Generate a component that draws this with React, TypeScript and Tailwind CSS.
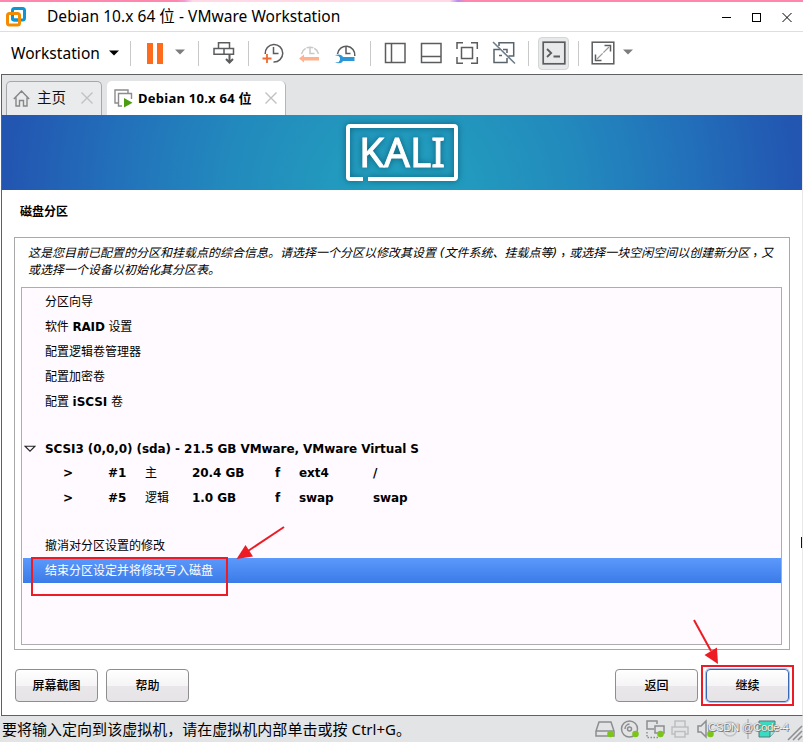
import type { ReactNode } from "react";

const ui = "font-['Noto_Sans','Noto_Sans_CJK_SC',sans-serif]";
const vm = "font-['DejaVu_Sans','Noto_Sans_CJK_SC',sans-serif]";

function Sep({ className = "" }: { className?: string }) {
  return <div className={`h-[25px] w-px shrink-0 bg-[#c8c8c8] ${className}`} />;
}

function Caret({ className = "" }: { className?: string }) {
  return (
    <svg className={`shrink-0 ${className}`} width="10" height="6" viewBox="0 0 10 6">
      <path d="M0 0.5H10L5 5.5Z" fill="currentColor" />
    </svg>
  );
}

function Icon({ className = "", children }: { className?: string; children: ReactNode }) {
  return (
    <svg
      className={`shrink-0 ${className}`}
      width="24"
      height="24"
      viewBox="0 0 24 24"
      fill="none"
      stroke="#5b5c5e"
      strokeWidth="1.5"
    >
      {children}
    </svg>
  );
}

function TitleBar() {
  return (
    <header className="flex h-[30px] shrink-0 items-center border-b border-[#dedede] bg-white pl-[5px]">
      <svg width="22" height="22" viewBox="0 0 22 22" fill="none" strokeWidth="3" className="mt-[1px] shrink-0">
        <rect x="7.5" y="2.5" width="12" height="11.5" rx="2" stroke="#0f95d3" />
        <rect x="2.5" y="7.5" width="12" height="11.5" rx="2" stroke="#f38b00" />
        <path d="M7.5 9V12a2 2 0 0 0 2 2H13" stroke="#0f95d3" />
      </svg>
      <h1 className="ml-5 whitespace-pre text-[15.5px] leading-[29px] tracking-[0.04px] text-black">
        Debian 10.x 64 位 - VMware Workstation
      </h1>
      <svg className="ml-auto mr-[10px] shrink-0" width="72" height="12" viewBox="0 0 72 12" fill="none" stroke="#000">
        <path d="M1 6.5H10" />
        <rect x="31.5" y="2.5" width="8" height="8" />
        <path d="M61.5 2L70.5 11M70.5 2L61.5 11" />
      </svg>
    </header>
  );
}

function Toolbar() {
  return (
    <nav className="flex h-[42px] shrink-0 items-center bg-white pl-[11px]">
      <span className="-mt-px w-[98px] text-[15.5px] leading-5 tracking-[0.05px] text-black">Workstation</span>
      <Caret className="text-black" />
      <Sep className="ml-[11px]" />
      <div className="ml-4 flex gap-1">
        <span className="h-[21px] w-[6px] bg-[#ff6b1c]" />
        <span className="h-[21px] w-[6px] bg-[#ff6b1c]" />
      </div>
      <Caret className="ml-3 -mt-[3px] text-[#7d7d7d]" />
      <Sep className="ml-[13px]" />
      <Icon className="ml-[13px]">
        <path d="M6.5 1.8H17.5V7.5H6.5ZM2 7.5H21.5V13.2H2ZM12 7.5V13.2" />
        <path d="M17.5 13V21M14 18L17.5 21.5L21 18" strokeWidth="2" />
      </Icon>
      <Sep className="ml-[12px]" />
      <Icon className="ml-[12px]">
        <path d="M4.2 13A8.8 8.8 0 1 1 12.5 21" />
        <path d="M12.5 6V12.5H17.5" />
        <path d="M1.5 17.5H10.5M6 13V22" stroke="#ef6b32" strokeWidth="1.8" />
      </Icon>
      <Icon className="ml-[13px]">
        <path d="M3.5 13A8.7 8.7 0 0 1 20.5 13" stroke="#c9c9c9" strokeDasharray="7 1" />
        <path d="M12 6V12.5H16.5" stroke="#c9c9c9" />
        <path d="M1 17.5L6 13.5V16H21V19.5H6V21.5Z" fill="#ffb28d" stroke="none" />
      </Icon>
      <Icon className="ml-[12px]">
        <path d="M3.5 13A8.7 8.7 0 0 1 20.8 15" />
        <path d="M12 6V12.5H16.5" />
        <path
          d="M1 14.3C4.5 12.5 8 13.5 9 16H20.5V20H9C8 22.4 4 23 1 21.3H4.5L6 19V16.8L4.5 15Z"
          fill="#2d96d4"
          stroke="none"
        />
      </Icon>
      <Sep className="ml-[12px]" />
      <Icon className="ml-[12px]">
        <path d="M2.5 2.5H22V21.5H2.5ZM8.5 2.5V21.5" />
      </Icon>
      <Icon className="ml-[12px]">
        <path d="M2.5 2.5H22V21.5H2.5ZM2.5 15.5H22" />
      </Icon>
      <Icon className="ml-[12px]">
        <path d="M2 8V1.7H8M16 1.7H22.3V8M22.3 16V22.3H16M8 22.3H2V16" />
        <rect x="6.5" y="6.5" width="11" height="11" />
      </Icon>
      <Icon className="ml-[13px]">
        <path d="M7 5V1.7H21.7V15H16.5M8 8.5H2V21.5H15V17M11 8.5H15V12M7 14.5H10" stroke="#58636c" />
        <path d="M1 1L23 22.5" stroke="#6c7c8a" />
      </Icon>
      <Sep className="ml-[12px]" />
      <div className="ml-[9px] flex h-[33px] w-[31px] shrink-0 items-center justify-center rounded-[4px] border border-[#d4d5d5] bg-[#e8e9ea]">
        <Icon className="-mt-px">
          <rect x="1.2" y="1.2" width="21.6" height="21.6" strokeWidth="1.7" />
          <path d="M5 8L9.2 12L5 16M11.5 15.5H18" strokeWidth="1.8" />
        </Icon>
      </div>
      <Sep className="ml-[9px]" />
      <Icon className="ml-[12px]">
        <rect x="1.2" y="1.2" width="21.6" height="21.6" />
        <path d="M13.5 4.5H19.5V10.5M4.5 13.5V19.5H10.5" />
        <path d="M6 18L18 6" stroke="#999" strokeWidth="1.2" strokeDasharray="8 1" />
      </Icon>
      <Caret className="ml-[8px] -mt-[3px] text-[#7d7d7d]" />
    </nav>
  );
}

function Close({ className = "" }: { className?: string }) {
  return (
    <svg className={`shrink-0 ${className}`} width="12" height="12" viewBox="0 0 12 12" stroke="#c1c1c1" strokeWidth="1.4">
      <path d="M0.5 0.5L11.5 11.5M11.5 0.5L0.5 11.5" />
    </svg>
  );
}

function Tabs() {
  return (
    <div className="flex h-10 shrink-0 items-end gap-[5px] bg-[#e3e4e6] pl-1">
      <div className="flex h-[34px] w-[96px] items-center rounded-t-[5px] border border-b-0 border-[#a5a7aa] bg-[#eaebec] pl-[6px]">
        <svg width="17" height="17" viewBox="0 0 17 17" fill="none" stroke="#868686" strokeWidth="1.4" className="shrink-0">
          <path d="M0.8 9L8.5 1L16.2 9M3 7.5V16H6.5V10.5H10.5V16H14V7.5" />
        </svg>
        <span className="-mt-[3px] ml-[7px] text-[14.5px] leading-5 text-[#111]">主页</span>
        <Close className="-mt-px ml-[15px]" />
      </div>
      <div className="flex h-[34px] w-[179px] items-center rounded-t-[5px] border-r border-[#b4b5b7] bg-white pl-[7px]">
        <svg width="19" height="19" viewBox="0 0 19 19" fill="none" stroke="#8c8c8c" strokeWidth="1.4" className="shrink-0">
          <path d="M4 14H1V1H14V4M8 17H4.5V4.5H17.5V10" />
          <path d="M10 9L18.5 13.8L10 18.5Z" fill="#4c9c13" stroke="none" />
        </svg>
        <span className="ml-[5px] w-[127px] whitespace-pre text-[13px] font-bold leading-5 tracking-[0.26px] text-black">
          Debian 10.x 64 位
        </span>
        <Close className="-mt-px" />
      </div>
    </div>
  );
}

function Banner() {
  return (
    <div className="flex h-[75px] shrink-0 justify-center bg-[radial-gradient(circle_at_50%_110%,#209fbd_0%,#2299be_18%,#228abd_43%,#226fba_72%,#2256b1_97%)]">
      <svg width="120" height="75" viewBox="342 115 120 75" className="drop-shadow-[0_0_3px_rgba(0,60,80,0.65)]">
        <path d="M363 179H350a2 2 0 0 1-2-2V128a2 2 0 0 1 2-2H454a2 2 0 0 1 2 2V177a2 2 0 0 1-2 2H368" fill="none" stroke="#fff" strokeWidth="4" />
        <text
          x="359"
          y="167"
          fill="#fff"
          stroke="#fff"
          strokeWidth="0.9"
          fontSize="39.5"
          textLength="86"
          lengthAdjust="spacingAndGlyphs"
          className={ui}
        >
          KALI
        </text>
      </svg>
    </div>
  );
}

function Row({ children, className = "h-[25px]" }: { children?: ReactNode; className?: string }) {
  return <div className={`flex shrink-0 items-center whitespace-pre pl-[22px] ${className}`}>{children}</div>;
}

function Partition({ cells, className }: { cells: string[]; className: string }) {
  return (
    <div className={`grid grid-cols-[45px_37px_47px_83px_24px_74px_1fr] items-center whitespace-pre pl-10 font-bold tracking-[-0.07px] ${className}`}>
      {cells.map((cell, i) => (
        <span key={i} className={i === 2 ? "font-normal" : ""}>
          {cell}
        </span>
      ))}
    </div>
  );
}

function PartitionList() {
  return (
    <div className="ml-[6px] mr-[7px] flex h-[358px] flex-col border border-[#adadad] bg-[#fefaff] pl-px pt-px text-[12px] leading-[18px] text-black">
      <Row>分区向导</Row>
      <Row className="h-[25px] tracking-[-0.15px]">
        软件 <b>RAID</b> 设置
      </Row>
      <Row>配置逻辑卷管理器</Row>
      <Row>配置加密卷</Row>
      <Row className="h-[25px] tracking-[-0.07px]">
        配置 <b>iSCSI</b> 卷
      </Row>
      <Row className="h-[22px]" />
      <div className="flex h-[25px] items-center pl-[1px]">
        <svg width="12" height="8" viewBox="0 0 12 8" fill="none" stroke="#222" strokeWidth="1.1">
          <path d="M1 1.2H11L6 6.2Z" />
        </svg>
        <b className="ml-[9px] whitespace-pre tracking-[-0.075px]">SCSI3 (0,0,0) (sda) - 21.5 GB VMware, VMware Virtual S</b>
      </div>
      <Partition className="h-[24px]" cells={[">", "#1", "主", "20.4 GB", "f", "ext4", "/"]} />
      <Partition className="h-[25px]" cells={[">", "#5", "逻辑", "1.0 GB", "f", "swap", "swap"]} />
      <Row className="h-[23px]" />
      <Row className="h-[25px] pt-px">撤消对分区设置的修改</Row>
      <Row className="h-[25px] bg-linear-to-b from-[#5c99fc] to-[#3b7be8] pt-px text-white">结束分区设定并将修改写入磁盘</Row>
    </div>
  );
}

function Button({ children, focused = false }: { children: ReactNode; focused?: boolean }) {
  return (
    <button
      className={`h-[33px] w-[83px] rounded-[4px] border bg-[linear-gradient(#ffffff,#f6f4f6_50%,#e9e7e9_52%,#e6e4e6)] pt-px text-[12px] font-medium leading-[18px] text-black ${
        focused ? "border-[#3867b4] shadow-[0_0_0_1px_#a9c3f0]" : "border-[#8e8e8e]"
      }`}
    >
      {children}
    </button>
  );
}

function Comma() {
  return <span className="relative top-[3px] font-['Noto_Sans_CJK_TC',sans-serif] not-italic">，</span>;
}

function Installer() {
  return (
    <main className={`flex h-[525px] shrink-0 flex-col bg-white ${vm}`}>
      <h2 className="ml-[18px] mt-[13px] text-[12px] font-bold leading-[18px] text-black">磁盘分区</h2>
      <section className="ml-3 mt-[16px] h-[413px] w-[776px] border border-[#a8a8a8]">
        <div className="ml-[13px] h-[49px] whitespace-pre pt-[5px] text-[12px] italic leading-[17px] text-black">
          <p>
            这是您目前已配置的分区和挂载点的综合信息。请选择一个分区以修改其设置 (文件系统、挂载点等)
            <Comma />
            或选择一块空闲空间以创建新分区
            <Comma />又
          </p>
          <p>或选择一个设备以初始化其分区表。</p>
        </div>
        <PartitionList />
      </section>
      <div className="ml-[13px] mr-[13px] mt-[19px] flex">
        <Button>屏幕截图</Button>
        <div className="ml-2">
          <Button>帮助</Button>
        </div>
        <div className="ml-auto mr-2">
          <Button>返回</Button>
        </div>
        <Button focused>继续</Button>
      </div>
    </main>
  );
}

function StatusBar() {
  return (
    <footer className="relative flex h-[26px] shrink-0 items-center bg-[#e3e4e6] pl-[2px]">
      <span className="whitespace-pre text-[15px] leading-[26px] tracking-[0.02px] text-black">
        要将输入定向到该虚拟机，请在虚拟机内部单击或按 Ctrl+G。
      </span>
      <svg className="ml-auto shrink-0" width="211" height="26" viewBox="592 716 211 26" fill="none" stroke="#8c8d8f" strokeWidth="1.5">
        <path d="M599 722H611L614 731V736H596V731ZM596 731H614" />
        <circle cx="629.5" cy="729" r="8" />
        <circle cx="629.5" cy="729" r="2" />
        <path d="M625 729A5 5 0 0 1 629.5 724" />
        <path d="M657 724V721H647V729H654M655 726H664V733H655Z" />
        <path d="M647 732V737.5H659" strokeDasharray="1.5 1.5" />
        <g stroke="#bdbec0">
          <path d="M675 727V721H685V727M675 734H672V727H688V734H685M675 731.5H685V737H675Z" />
        </g>
        <path d="M698 726H701L706 721V737L701 732H698ZM709 725V733" />
        <g stroke="#c3c4c6">
          <circle cx="730" cy="729" r="7" />
          <circle cx="730" cy="729" r="3" />
        </g>
        <path d="M748 719V739" stroke="#b5b6b8" />
        <path d="M759 721H775V731L770 737H759Z" fill="#38dcc3" stroke="#58777a" strokeWidth="1" />
        <path d="M770 737V731H775" fill="#91eee0" stroke="#58777a" strokeWidth="1" />
        <g fill="#7bc51b" stroke="none">
          <circle cx="610.5" cy="734" r="3.3" />
          <circle cx="635.5" cy="734" r="3.3" />
          <circle cx="660.5" cy="734" r="3.3" />
          <circle cx="710.5" cy="734" r="3.3" />
        </g>
        <path d="M788 740L802 726M793 740L802 731M798 740L802 736" stroke="#8f9092" strokeWidth="1.6" />
      </svg>
      <span className="absolute left-[708px] top-[3px] whitespace-pre font-['Liberation_Sans',sans-serif] text-[11.5px] leading-4 tracking-[-0.4px] text-[#f6f6f6] [text-shadow:1px_1px_0_#77797b,0_0_1px_#555]">
        CSDN @Code-4
      </span>
    </footer>
  );
}

function Annotations() {
  return (
    <svg className="pointer-events-none absolute left-0 top-0" width="803" height="742" fill="none" stroke="#ed1c24" strokeWidth="2">
      <rect x="32" y="558" width="195" height="37" />
      <path d="M284 527L248 551" />
      <path d="M236.5 559L245.5 545L253 556.5Z" fill="#ed1c24" stroke="none" />
      <rect x="702" y="666" width="91" height="39" />
      <path d="M694 620L711 651" />
      <path d="M718 664L704.5 655L717 647.5Z" fill="#ed1c24" stroke="none" />
      <path d="M801.5 537V548" stroke="#111" strokeWidth="1" />
    </svg>
  );
}

export default function App() {
  return (
    <div className={`relative flex h-[742px] w-[803px] flex-col overflow-hidden bg-white ${ui}`}>
      <div className="h-[2px] shrink-0 bg-[linear-gradient(90deg,#ff86ad_0_22%,#f09ad8_23%,#ffd9e6_24%_56%,#b88cf0_57%,#ff86ad_58%)]" />
      <TitleBar />
      <Toolbar />
      <div className="ml-px flex h-[642px] shrink-0 flex-col border border-[#5f6063] border-r-[#e8e8e8]">
        <Tabs />
        <Banner />
        <Installer />
      </div>
      <StatusBar />
      <Annotations />
    </div>
  );
}
